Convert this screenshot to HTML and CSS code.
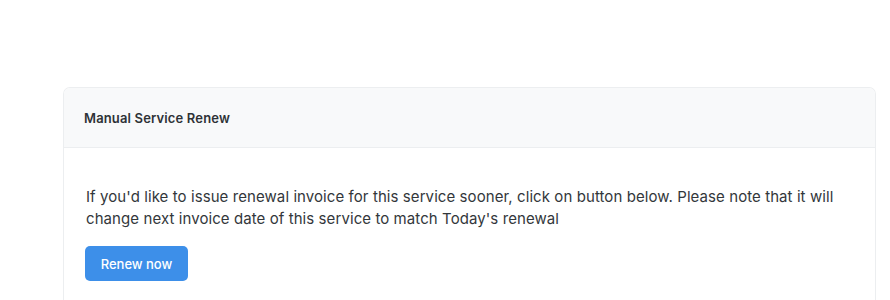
FILE: index.html
```html
<!DOCTYPE html>
<html>
<head>
<meta charset="utf-8">
<link rel="stylesheet" href="styles.css">
</head>
<body>
<div class="page">
  <div class="card">
    <div class="card-header">Manual Service Renew</div>
    <div class="card-body">
      <p class="note">If you'd like to issue renewal invoice for this service sooner, click on button below. Please note that it will change next invoice date of this service to match Today's renewal</p>
      <button class="btn">Renew now</button>
    </div>
  </div>
</div>
</body>
</html>
```
FILE: styles.css
```css
html, body {
  margin: 0;
  background: #fff;
  font-family: Inter, "Noto Sans", sans-serif;
  color: #2b2f33;
}
body {
  height: 300px;
  overflow: hidden;
}
.page {
  padding: 87px 14px 0 63px;
}
.card {
  border: 1px solid #eceef0;
  border-bottom: none;
  border-radius: 7px 7px 0 0;
  height: 213px;
  overflow: hidden;
}
.card-header {
  background: #f8f9fa;
  height: 59px;
  border-bottom: 1px solid #eceef0;
  display: flex;
  align-items: center;
  padding: 0 20px;
  font-size: 13px;
  letter-spacing: 0.15px;
  font-weight: 600;
  color: #2e3236;
}
.card-body {
  padding: 38px 21px 0 21px;
}
.note {
  margin: 0 0 16px 1px;
  font-size: 15px;
  letter-spacing: 0.08px;
  line-height: 22px;
  color: #33373b;
}
.btn {
  background: #3d8fe9;
  color: #fff;
  border: none;
  border-radius: 5px;
  height: 35px;
  width: 103px;
  font-family: inherit;
  font-size: 13px;
  font-weight: 500;
  padding: 0;
}
```
